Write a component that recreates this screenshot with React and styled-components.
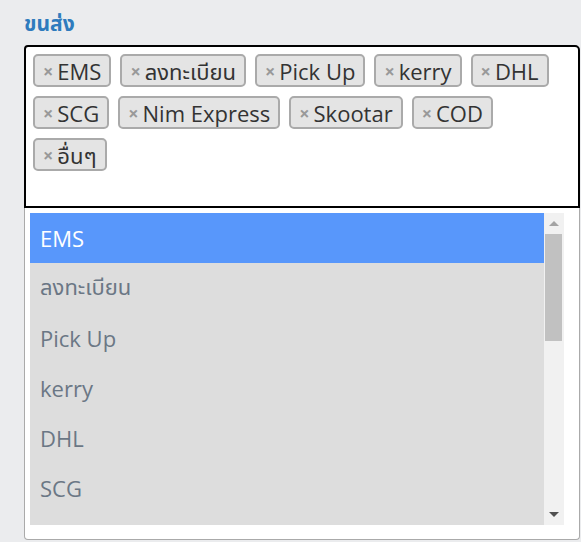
import React from "react";
import styled, { createGlobalStyle } from "styled-components";

const Global = createGlobalStyle`
  html, body { margin: 0; padding: 0; }
  body {
    background: #ebecee;
    font-family: "Open Sans", "Noto Sans Thai", "Noto Sans", sans-serif;
    overflow: hidden;
  }
`;

const Page = styled.div`
  padding: 8px 0 0 24px;
  width: 557px;
`;

const Label = styled.div`
  color: #2f7bbd;
  font-weight: 700;
  font-size: 21px;
  line-height: 30px;
  height: 37px;
`;

const Selection = styled.div`
  box-sizing: border-box;
  width: 556px;
  border: 2px solid #000;
  border-radius: 4px 5px 0 0;
  background: #fff;
  padding: 7px 7px 1px 7px;
  display: flex;
  flex-wrap: wrap;
  column-gap: 9px;
  row-gap: 9px;
  align-content: flex-start;
`;

const Tag = styled.span`
  box-sizing: border-box;
  height: 33px;
  display: inline-flex;
  align-items: center;
  background: #e4e4e4;
  border: 2px solid #aaa;
  border-radius: 5px;
  padding: 0 8px 0 8px;
  color: #333;
  font-size: 22px;
  line-height: 1;
`;

const Remove = styled.span`
  color: #999;
  font-weight: 700;
  font-size: 18px;
  margin-right: 4px;
`;

const Search = styled.div`
  width: 100%;
  height: 25px;
`;

const Dropdown = styled.div`
  box-sizing: border-box;
  width: 556px;
  background: #fff;
  border: 1px solid #aaa;
  border-top: none;
  border-radius: 0 0 4px 4px;
  padding: 5px 15px 14px 5px;
  display: flex;
`;

const List = styled.ul`
  list-style: none;
  margin: 0;
  padding: 0;
  width: 514px;
  height: 312px;
  overflow: hidden;
  background: #dddddd;
`;

const Option = styled.li`
  height: 50px;
  display: flex;
  align-items: center;
  padding-left: 10px;
  font-size: 22px;
  color: ${(p) => (p.$active ? "#fff" : "#6b7785")};
  background: ${(p) => (p.$active ? "#5897fb" : "transparent")};
`;

const Scrollbar = styled.div`
  width: 20px;
  height: 312px;
  background: #f1f1f1;
  display: flex;
  flex-direction: column;
  align-items: center;
`;

const ArrowBox = styled.div`
  height: 21px;
  width: 100%;
  display: flex;
  align-items: center;
  justify-content: center;
  margin-left: -1px;
`;

const Arrow = styled.span`
  width: 0;
  height: 0;
  border-left: 5px solid transparent;
  border-right: 5px solid transparent;
  ${(p) =>
    p.$down
      ? "border-top: 5px solid #505050;"
      : "border-bottom: 5px solid #a3a3a3;"}
`;

const Track = styled.div`
  flex: 1;
  width: 100%;
  padding: 0 2px 0 1px;
  box-sizing: border-box;
`;

const Thumb = styled.div`
  height: 107px;
  background: #c1c1c1;
`;

const tags = [
  "EMS",
  "ลงทะเบียน",
  "Pick Up",
  "kerry",
  "DHL",
  "SCG",
  "Nim Express",
  "Skootar",
  "COD",
  "อื่นๆ",
];

const options = ["EMS", "ลงทะเบียน", "Pick Up", "kerry", "DHL", "SCG"];

export default function App() {
  return (
    <>
      <Global />
      <Page>
        <Label>ขนส่ง</Label>
        <Selection>
          {tags.map((t) => (
            <Tag key={t}>
              <Remove>×</Remove>
              {t}
            </Tag>
          ))}
          <Search />
        </Selection>
        <Dropdown>
          <List>
            {options.map((o, i) => (
              <Option key={o} $active={i === 0}>
                {o}
              </Option>
            ))}
          </List>
          <Scrollbar>
            <ArrowBox>
              <Arrow />
            </ArrowBox>
            <Track>
              <Thumb />
            </Track>
            <ArrowBox>
              <Arrow $down />
            </ArrowBox>
          </Scrollbar>
        </Dropdown>
      </Page>
    </>
  );
}
